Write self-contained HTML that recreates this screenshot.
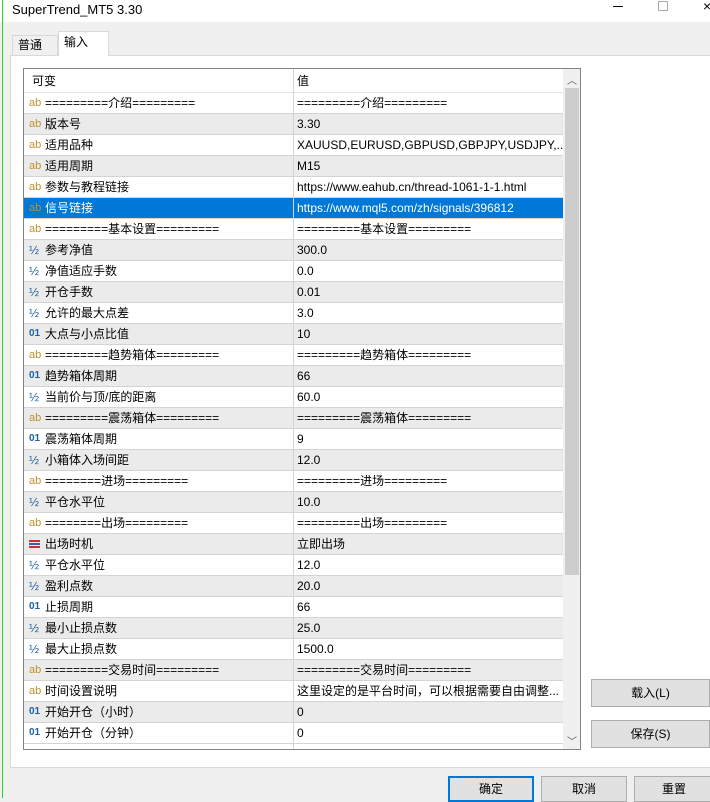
<!DOCTYPE html>
<html><head><meta charset="utf-8"><style>
*{margin:0;padding:0;box-sizing:border-box}
body{width:710px;height:798px;overflow:hidden;background:#f0f0f0;font-family:"Liberation Sans","Noto Sans CJK SC",sans-serif;font-size:12px;color:#000;position:relative}
.abs{position:absolute}
#title{left:0;top:0;width:710px;height:22px;background:#fff}
#title span{position:absolute;left:12px;top:0;line-height:20px;font-size:13px}
#green{left:2px;top:0;width:1px;height:798px;background:#22dd22}
.tab{top:33px;height:22px;border:1px solid #d9d9d9;border-bottom:none;padding:0 0 0 5px;line-height:20px;font-size:12px}
#panel{left:10px;top:55px;width:700px;height:713px;background:#fff;border:1px solid #d9d9d9;border-right:none}
#tbl{left:23px;top:68px;width:558px;height:682px;border:1px solid #838383;background:#fff;overflow:hidden}
.row{position:absolute;left:0;width:540px;height:21px;border-bottom:1px solid #d4d4d4;white-space:nowrap;line-height:20px}
.row span{position:absolute;top:0;height:20px;line-height:20px}
.row.g{background:#ebebeb}
.row.sel{background:#0078d7;color:#fff}
.ic{left:5px;font-size:11px;width:16px}
.n{left:21px}
.v{left:273px}
.ab{color:#c09030}.h{color:#2060a0;font-size:12px}.o{color:#2060a0;font-size:10px;font-weight:bold}
#div{left:269px;top:0;width:1px;height:682px;background:#d4d4d4}
#sb{left:539px;top:0;width:18px;height:680px;background:#f0f0f0}
#thumb{left:2px;top:19px;width:14px;height:487px;background:#cdcdcd}
.btn{background:#e1e1e1;border:1px solid #adadad;text-align:center;font-size:12px}
</style></head><body>
<div id="title" class="abs"><span>SuperTrend_MT5 3.30</span>
<div class="abs" style="left:613px;top:6px;width:10px;height:1px;background:#000"></div>
<div class="abs" style="left:658px;top:1px;width:10px;height:10px;border:1px solid #aaa"></div>
<div class="abs" style="left:703px;top:-2px;font-size:14px">×</div>
</div>
<div id="green" class="abs"></div>
<div id="panel" class="abs"></div>
<div class="abs tab" style="left:12px;width:46px;top:35px;height:20px;line-height:18px">普通</div>
<div class="abs tab" style="left:58px;width:51px;top:31px;height:25px;background:#fff">输入</div>
<div id="tbl" class="abs">
<div class="row" style="top:0;height:24px;border-bottom:1px solid #e5e5e5;line-height:24px"><span class="n" style="left:8px;line-height:24px;height:24px">可变</span><span class="v" style="line-height:24px;height:24px">值</span></div>
<div id="rows"></div>
<div id="div" class="abs"></div>
<div id="sb" class="abs"><div class="abs" style="left:4px;top:3px;font-size:10px;color:#555">︿</div><div id="thumb" class="abs"></div><div class="abs" style="left:4px;top:664px;font-size:10px;color:#555">﹀</div></div>
</div>
<div class="abs btn" style="left:591px;top:679px;width:119px;height:28px;line-height:26px">载入(L)</div>
<div class="abs btn" style="left:591px;top:720px;width:119px;height:28px;line-height:26px">保存(S)</div>
<div class="abs btn" style="left:448px;top:776px;width:86px;height:26px;line-height:22px;border:2px solid #0078d7">确定</div>
<div class="abs btn" style="left:541px;top:776px;width:86px;height:26px;line-height:24px">取消</div>
<div class="abs btn" style="left:634px;top:776px;width:80px;height:26px;line-height:24px">重置</div>
<script>
var E='=========';
var d=[
['a',E+'介绍'+E,E+'介绍'+E],['a','版本号','3.30'],['a','适用品种','XAUUSD,EURUSD,GBPUSD,GBPJPY,USDJPY,...'],['a','适用周期','M15'],
['a','参数与教程链接','https://www.eahub.cn/thread-1061-1-1.html'],['a','信号链接','https://www.mql5.com/zh/signals/396812'],
['a',E+'基本设置'+E,E+'基本设置'+E],['h','参考净值','300.0'],['h','净值适应手数','0.0'],['h','开仓手数','0.01'],['h','允许的最大点差','3.0'],
['o','大点与小点比值','10'],['a',E+'趋势箱体'+E,E+'趋势箱体'+E],['o','趋势箱体周期','66'],['h','当前价与顶/底的距离','60.0'],
['a',E+'震荡箱体'+E,E+'震荡箱体'+E],['o','震荡箱体周期','9'],['h','小箱体入场间距','12.0'],['a','========进场=========','=========进场========='],
['h','平仓水平位','10.0'],['a','========出场=========','=========出场========='],['e','出场时机','立即出场'],['h','平仓水平位','12.0'],
['h','盈利点数','20.0'],['o','止损周期','66'],['h','最小止损点数','25.0'],['h','最大止损点数','1500.0'],
['a',E+'交易时间'+E,E+'交易时间'+E],['a','时间设置说明','这里设定的是平台时间，可以根据需要自由调整...'],['o','开始开仓（小时）','0'],['o','开始开仓（分钟）','0']];
var h='';
d.forEach(function(r,i){
var c='row'+(i==5?' sel':(i%2?' g':''));
var ic=r[0]=='a'?'<span class="ic ab">ab</span>':r[0]=='h'?'<span class="ic h">½</span>':r[0]=='o'?'<span class="ic o">01</span>':'<span class="ic" style="top:6px;height:9px"><div style="width:11px;height:2px;background:#d03030;margin-bottom:1px"></div><div style="width:11px;height:2px;background:#3060c0;margin-bottom:1px"></div><div style="width:11px;height:2px;background:#d03030"></div></span>';
h+='<div class="'+c+'" style="top:'+(24+21*i)+'px">'+ic+'<span class="n">'+r[1]+'</span><span class="v">'+r[2]+'</span></div>';
});
h+='<div class="row" style="top:'+(24+21*31)+'px;border:none"></div>';
document.getElementById('rows').innerHTML=h;
</script>
</body></html>
